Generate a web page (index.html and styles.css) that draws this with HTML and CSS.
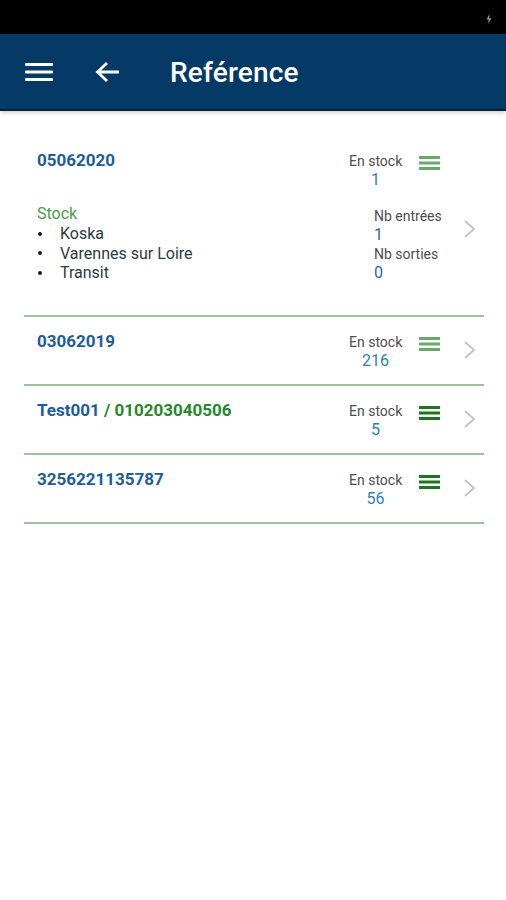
FILE: index.html
```html
<!DOCTYPE html>
<html lang="fr">
<head>
<meta charset="utf-8">
<title>Reférence</title>
<link rel="stylesheet" href="styles.css">
</head>
<body>
<div class="statusbar">
  <svg class="bolt" width="6" height="10" viewBox="0 0 6 10"><path d="M3.5 0 L0.5 5.5 H2.8 L2.2 10 L5.5 4.2 H3.2 Z" fill="#9a9a9a"/></svg>
</div>
<header class="toolbar">
  <svg class="menu" width="28" height="20" viewBox="0 0 28 20"><rect x="0" y="1" width="28" height="3" rx="1" fill="#fff"/><rect x="0" y="8.5" width="28" height="3" rx="1" fill="#fff"/><rect x="0" y="16" width="28" height="3" rx="1" fill="#fff"/></svg>
  <svg class="back" width="24" height="20" viewBox="0 0 24 20"><path d="M23 10 H3 M11 2 L2.5 10 L11 18" fill="none" stroke="#fff" stroke-width="2.8" stroke-linecap="square" stroke-linejoin="miter"/></svg>
  <h1 class="title">Reférence</h1>
</header>

<main class="list">
  <section class="item item-first">
    <div class="row-a">
      <div class="main"><span class="ref">05062020</span></div>
      <div class="stat"><div class="label">En stock</div><div class="value">1</div></div>
      <svg class="lines light" width="21" height="14" viewBox="0 0 21 14"><rect y="0" width="21" height="3" fill="currentColor"/><rect y="5.5" width="21" height="3" fill="currentColor"/><rect y="11" width="21" height="3" fill="currentColor"/></svg>
      <div class="spacer"></div>
    </div>
    <div class="row-b">
      <div class="main">
        <div class="stock">Stock</div>
        <ul class="places">
          <li>Koska</li>
          <li>Varennes sur Loire</li>
          <li>Transit</li>
        </ul>
      </div>
      <div class="nb">
        <div class="label">Nb entrées</div>
        <div class="value">1</div>
        <div class="label">Nb sorties</div>
        <div class="value">0</div>
      </div>
      <svg class="chev chev-first" width="13" height="20" viewBox="0 0 13 20"><path d="M2 2 L11 10 L2 18" fill="none" stroke="#c2c2c2" stroke-width="1.8"/></svg>
    </div>
  </section>

  <section class="item">
    <div class="main"><span class="ref">03062019</span></div>
    <div class="stat"><div class="label">En stock</div><div class="value">216</div></div>
    <svg class="lines light" width="21" height="14" viewBox="0 0 21 14"><rect y="0" width="21" height="3" fill="currentColor"/><rect y="5.5" width="21" height="3" fill="currentColor"/><rect y="11" width="21" height="3" fill="currentColor"/></svg>
    <svg class="chev" width="13" height="20" viewBox="0 0 13 20"><path d="M2 2 L11 10 L2 18" fill="none" stroke="#c2c2c2" stroke-width="1.8"/></svg>
  </section>

  <section class="item">
    <div class="main"><span class="ref">Test001 </span><span class="ref green">/ 010203040506</span></div>
    <div class="stat"><div class="label">En stock</div><div class="value">5</div></div>
    <svg class="lines dark" width="21" height="14" viewBox="0 0 21 14"><rect y="0" width="21" height="3" fill="currentColor"/><rect y="5.5" width="21" height="3" fill="currentColor"/><rect y="11" width="21" height="3" fill="currentColor"/></svg>
    <svg class="chev" width="13" height="20" viewBox="0 0 13 20"><path d="M2 2 L11 10 L2 18" fill="none" stroke="#c2c2c2" stroke-width="1.8"/></svg>
  </section>

  <section class="item">
    <div class="main"><span class="ref">3256221135787</span></div>
    <div class="stat"><div class="label">En stock</div><div class="value">56</div></div>
    <svg class="lines dark" width="21" height="14" viewBox="0 0 21 14"><rect y="0" width="21" height="3" fill="currentColor"/><rect y="5.5" width="21" height="3" fill="currentColor"/><rect y="11" width="21" height="3" fill="currentColor"/></svg>
    <svg class="chev" width="13" height="20" viewBox="0 0 13 20"><path d="M2 2 L11 10 L2 18" fill="none" stroke="#c2c2c2" stroke-width="1.8"/></svg>
  </section>
</main>
</body>
</html>
```

FILE: styles.css
```css
* { box-sizing: border-box; }

html, body {
  margin: 0;
  padding: 0;
  background: #ffffff;
  font-family: Roboto, "Noto Sans", "Liberation Sans", sans-serif;
}

.statusbar {
  height: 34px;
  background: #000000;
  display: flex;
  justify-content: flex-end;
  align-items: flex-start;
  padding: 14px 14px 0 0;
}

.toolbar {
  height: 77px;
  background: #043a65;
  border-bottom: 2px solid #02243f;
  box-shadow: 0 2px 4px rgba(0, 0, 0, 0.18);
  display: flex;
  align-items: center;
  padding-left: 25px;
}

.menu { display: block; margin-top: 1px; }
.back { display: block; margin-left: 42px; margin-top: 1px; }

.title {
  margin: 2px 0 0 51px;
  font-size: 28px;
  font-weight: 500;
  color: #ffffff;
  letter-spacing: 0.2px;
  line-height: 32px;
}

.list {
  margin: 25px 22px 0 24px;
}

.item {
  display: flex;
  align-items: flex-start;
  padding: 14px 8px 13px 13px;
  border-bottom: 2px solid #9cc39c;
}

.item-first {
  flex-direction: column;
  align-items: stretch;
  padding-bottom: 32px;
}

.row-a, .row-b {
  display: flex;
  align-items: flex-start;
}

.row-b { margin-top: 14px; }

.main { flex: 1; min-width: 0; }

.ref {
  font-size: 17px;
  font-weight: 700;
  line-height: 20px;
  color: #1c5d9a;
}

.ref.green { color: #25892a; }

.stat {
  width: 53px;
  margin-top: 2px;
  text-align: center;
}

.label {
  font-size: 14px;
  line-height: 18px;
  color: #4d4d4d;
  white-space: nowrap;
}

.value {
  font-size: 16px;
  line-height: 20px;
  color: #2f80b3;
}

.nb .value { color: #1f6aa6; }

.lines {
  display: block;
  margin-left: 17px;
  margin-top: 6px;
}

.lines.light { color: #69a969; }
.lines.dark { color: #1b761f; }

.spacer { width: 36px; flex: none; }

.chev {
  display: block;
  margin-left: 23px;
  margin-top: 9px;
  flex: none;
}

.chev-first { margin-left: 22px; margin-top: 15px; }

.stock {
  font-size: 16px;
  line-height: 20px;
  color: #4c9b4c;
}

.places {
  list-style: none;
  margin: 0;
  padding: 0;
}

.places li {
  display: flex;
  align-items: center;
  font-size: 16px;
  line-height: 19.5px;
  color: #2c3a44;
}

.places li::before {
  content: "";
  width: 4px;
  height: 4px;
  border-radius: 50%;
  background: #1a1a1a;
  margin: 0 18px 0 1px;
  flex: none;
}

.nb {
  width: 67px;
  margin-top: 3px;
}
```
